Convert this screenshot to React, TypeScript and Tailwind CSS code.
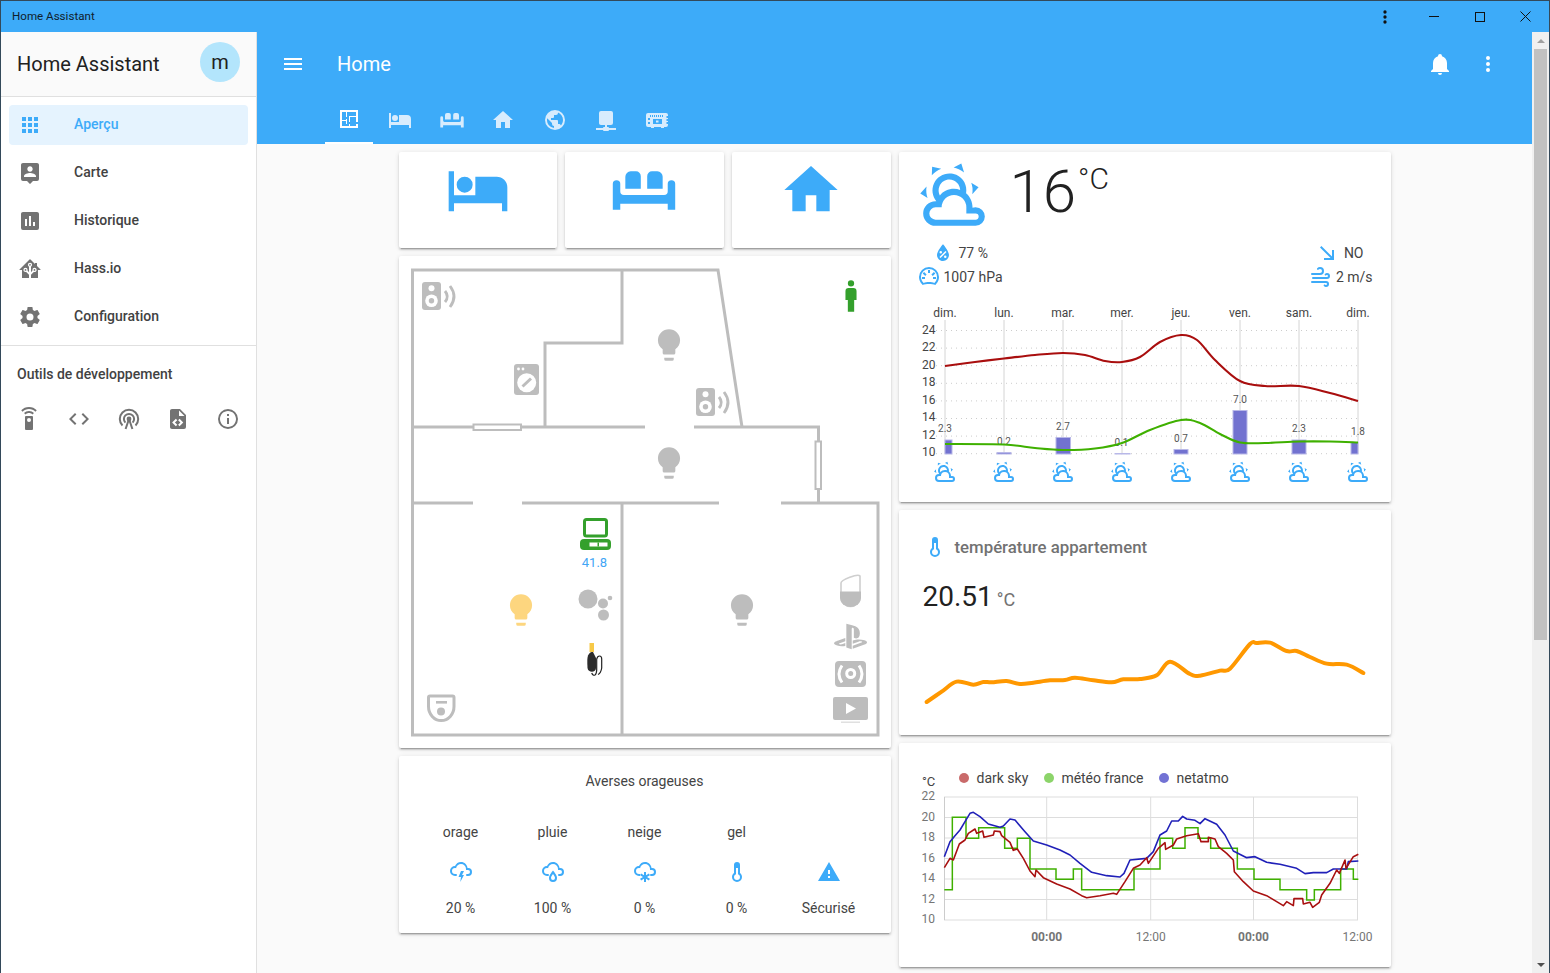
import React from 'react';
import { FaPlaystation } from 'react-icons/fa';

const mdi = {
  menu: 'M3,6H21V8H3V6M3,11H21V13H3V11M3,16H21V18H3V16Z',
  bell: 'M21,19V20H3V19L5,17V11C5,7.9 7.03,5.17 10,4.29C10,4.19 10,4.1 10,4A2,2 0 0,1 12,2A2,2 0 0,1 14,4C14,4.1 14,4.19 14,4.29C16.97,5.17 19,7.9 19,11V17L21,19M14,21A2,2 0 0,1 12,23A2,2 0 0,1 10,21',
  dots: 'M12,16A2,2 0 0,1 14,18A2,2 0 0,1 12,20A2,2 0 0,1 10,18A2,2 0 0,1 12,16M12,10A2,2 0 0,1 14,12A2,2 0 0,1 12,14A2,2 0 0,1 10,12A2,2 0 0,1 12,10M12,4A2,2 0 0,1 14,6A2,2 0 0,1 12,8A2,2 0 0,1 10,6A2,2 0 0,1 12,4Z',
  apps: 'M16,20H20V16H16M16,14H20V10H16M10,8H14V4H10M16,8H20V4H16M10,14H14V10H10M4,14H8V10H4M4,20H8V16H4M10,20H14V16H10M4,8H8V4H4V8Z',
  accountLocation: 'M18,16H6V15.1C6,13.1 10,12 12,12C14,12 18,13.1 18,15.1M12,5.3C13.5,5.3 14.7,6.5 14.7,8C14.7,9.5 13.5,10.7 12,10.7C10.5,10.7 9.3,9.5 9.3,8C9.3,6.5 10.5,5.3 12,5.3M19,2H5C3.89,2 3,2.89 3,4V18A2,2 0 0,0 5,20H9L12,23L15,20H19A2,2 0 0,0 21,18V4C21,2.89 20.1,2 19,2Z',
  pollBox: 'M17,17H15V13H17M13,17H11V7H13M9,17H7V10H9M19,3H5C3.89,3 3,3.89 3,5V19A2,2 0 0,0 5,21H19A2,2 0 0,0 21,19V5C21,3.89 20.1,3 19,3Z',
  hass: 'M21.8,13H20V21H13V17.67L15.79,14.88L16.5,15C17.66,15 18.6,14.06 18.6,12.9C18.6,11.74 17.66,10.8 16.5,10.8A2.1,2.1 0 0,0 14.4,12.9L14.5,13.61L13,15.13V9.65C13.66,9.29 14.1,8.6 14.1,7.8A2.1,2.1 0 0,0 12,5.7A2.1,2.1 0 0,0 9.9,7.8C9.9,8.6 10.34,9.29 11,9.65V15.13L9.5,13.61L9.6,12.9A2.1,2.1 0 0,0 7.5,10.8A2.1,2.1 0 0,0 5.4,12.9A2.1,2.1 0 0,0 7.5,15L8.21,14.88L11,17.67V21H4V13H2.25C1.83,13 1.42,13 1.42,12.79C1.43,12.57 1.85,12.15 2.28,11.72L11,3C11.33,2.67 11.67,2.33 12,2.33C12.33,2.33 12.67,2.67 13,3L17,7V6H19V9L21.78,11.78C22.18,12.18 22.59,12.59 22.6,12.8C22.6,13 22.2,13 21.8,13M7.5,12A0.9,0.9 0 0,1 8.4,12.9A0.9,0.9 0 0,1 7.5,13.8A0.9,0.9 0 0,1 6.6,12.9A0.9,0.9 0 0,1 7.5,12M16.5,12C17,12 17.4,12.4 17.4,12.9C17.4,13.4 17,13.8 16.5,13.8A0.9,0.9 0 0,1 15.6,12.9A0.9,0.9 0 0,1 16.5,12M12,6.9C12.5,6.9 12.9,7.3 12.9,7.8C12.9,8.3 12.5,8.7 12,8.7C11.5,8.7 11.1,8.3 11.1,7.8C11.1,7.3 11.5,6.9 12,6.9Z',
  settings: 'M12,15.5A3.5,3.5 0 0,1 8.5,12A3.5,3.5 0 0,1 12,8.5A3.5,3.5 0 0,1 15.5,12A3.5,3.5 0 0,1 12,15.5M19.43,12.97C19.47,12.65 19.5,12.33 19.5,12C19.5,11.67 19.47,11.34 19.43,11L21.54,9.37C21.73,9.22 21.78,8.95 21.66,8.73L19.66,5.27C19.54,5.05 19.27,4.96 19.05,5.05L16.56,6.05C16.04,5.66 15.5,5.32 14.87,5.07L14.5,2.42C14.46,2.18 14.25,2 14,2H10C9.75,2 9.54,2.18 9.5,2.42L9.13,5.07C8.5,5.32 7.96,5.66 7.44,6.05L4.95,5.05C4.73,4.96 4.46,5.05 4.34,5.27L2.34,8.73C2.21,8.95 2.27,9.22 2.46,9.37L4.57,11C4.53,11.34 4.5,11.67 4.5,12C4.5,12.33 4.53,12.65 4.57,12.97L2.46,14.63C2.27,14.78 2.21,15.05 2.34,15.27L4.34,18.73C4.46,18.95 4.73,19.03 4.95,18.95L7.44,17.94C7.96,18.34 8.5,18.68 9.13,18.93L9.5,21.58C9.54,21.82 9.75,22 10,22H14C14.25,22 14.46,21.82 14.5,21.58L14.87,18.93C15.5,18.67 16.04,18.34 16.56,17.94L19.05,18.95C19.27,19.03 19.54,18.95 19.66,18.73L21.66,15.27C21.78,15.05 21.73,14.78 21.54,14.63L19.43,12.97Z',
  remote: 'M12,0C8.96,0 6.21,1.23 4.22,3.22L5.63,4.63C7.26,3 9.5,2 12,2C14.5,2 16.74,3 18.36,4.64L19.77,3.23C17.79,1.23 15.04,0 12,0M7.05,6.05L8.46,7.46C9.37,6.56 10.62,6 12,6C13.38,6 14.63,6.56 15.54,7.46L16.95,6.05C15.68,4.78 13.93,4 12,4C10.07,4 8.32,4.78 7.05,6.05M12,15A2,2 0 0,1 10,13A2,2 0 0,1 12,11A2,2 0 0,1 14,13A2,2 0 0,1 12,15M15,9H9A1,1 0 0,0 8,10V22A1,1 0 0,0 9,23H15A1,1 0 0,0 16,22V10A1,1 0 0,0 15,9Z',
  code: 'M14.6,16.6L19.2,12L14.6,7.4L16,6L22,12L16,18L14.6,16.6M9.4,16.6L4.8,12L9.4,7.4L8,6L2,12L8,18L9.4,16.6Z',
  fileXml: 'M13,9H18.5L13,3.5V9M6,2H14L20,8V20A2,2 0 0,1 18,22H6C4.89,22 4,21.1 4,20V4C4,2.89 4.89,2 6,2M6.12,15.5L9.86,19.24L11.28,17.83L8.95,15.5L11.28,13.17L9.86,11.76L6.12,15.5M17.28,15.5L13.54,11.76L12.12,13.17L14.45,15.5L12.12,17.83L13.54,19.24L17.28,15.5Z',
  info: 'M11,9H13V7H11M12,20C7.59,20 4,16.41 4,12C4,7.59 7.59,4 12,4C16.41,4 20,7.59 20,12C20,16.41 16.41,20 12,20M12,2A10,10 0 0,0 2,12A10,10 0 0,0 12,22A10,10 0 0,0 22,12A10,10 0 0,0 12,2M11,17H13V11H11V17Z',
  floorPlan: 'M10,5V10H9V5H5V13H9V12H10V17H9V14H5V19H12V17H13V19H19V17H21V21H3V3H21V15H19V10H13V15H12V9H19V5H10Z',
  bed: 'M19,7H11V14H3V5H1V20H3V17H21V20H23V11A4,4 0 0,0 19,7M7,13A3,3 0 0,0 10,10A3,3 0 0,0 7,7A3,3 0 0,0 4,10A3,3 0 0,0 7,13Z',
  sofa: 'M7,5H9A1.8,1.8 0 0,1 10.8,6.8V11.5H5V7A2,2 0 0,1 7,5M15,5H17A2,2 0 0,1 19,7V11.5H13.2V6.8A1.8,1.8 0 0,1 15,5M1.7,8.3A1.4,1.4 0 0,1 3.1,9.7V12.5A1.4,1.4 0 0,0 4.5,13.9H19.5A1.4,1.4 0 0,0 20.9,12.5V9.7A1.4,1.4 0 0,1 23.7,9.7V19.4H20.9V17.2H3.1V19.4H0.3V9.7A1.4,1.4 0 0,1 1.7,8.3Z',
  home: 'M10,20V14H14V20H19V12H22L12,3L2,12H5V20H10Z',
  earth: 'M17.9,17.39C17.64,16.59 16.89,16 16,16H15V13A1,1 0 0,0 14,12H8V10H10A1,1 0 0,0 11,9V7H13A2,2 0 0,0 15,5V4.59C17.93,5.77 20,8.64 20,12C20,14.08 19.2,15.97 17.9,17.39M11,19.93C7.05,19.44 4,16.08 4,12C4,11.38 4.08,10.78 4.21,10.21L9,15V16A2,2 0 0,0 11,18M12,2A10,10 0 0,0 2,12A10,10 0 0,0 12,22A10,10 0 0,0 22,12A10,10 0 0,0 12,2Z',
  network: 'M17,3A2,2 0 0,1 19,5V15A2,2 0 0,1 17,17H13V19H14A1,1 0 0,1 15,20H22V22H15A1,1 0 0,1 14,23H10A1,1 0 0,1 9,22H2V20H9A1,1 0 0,1 10,19H11V17H7C5.89,17 5,16.1 5,15V5A2,2 0 0,1 7,3H17Z',
  partly: 'M12.74,5.47C15.1,6.5 16.35,9.03 15.92,11.46C17.19,12.56 18,14.19 18,16V16.17C18.31,16.06 18.65,16 19,16A3,3 0 0,1 22,19A3,3 0 0,1 19,22H6A4,4 0 0,1 2,18A4,4 0 0,1 6,14H6.27C5,12.45 4.6,10.24 5.5,8.26C6.72,5.5 9.97,4.24 12.74,5.47M11.93,7.3C10.16,6.5 8.09,7.31 7.31,9.07C6.85,10.09 6.93,11.22 7.41,12.13C8.5,10.83 10.16,10 12,10C12.7,10 13.38,10.12 14,10.34C13.94,9.06 13.18,7.86 11.93,7.3M13.55,3.64C13,3.4 12.45,3.23 11.88,3.12L14.37,1.82L15.27,4.71C14.76,4.29 14.19,3.93 13.55,3.64M6.09,4.44C5.6,4.79 5.17,5.19 4.8,5.63L4.91,2.82L7.87,3.5C7.25,3.71 6.65,4.03 6.09,4.44M18,9.71C17.91,9.12 17.78,8.55 17.59,8L19.97,9.5L17.92,11.73C18.03,11.08 18.05,10.4 18,9.71M3.04,11.3C3.11,11.9 3.24,12.47 3.43,13L1.06,11.5L3.1,9.28C3,9.93 2.97,10.61 3.04,11.3M19,18H16V16A4,4 0 0,0 12,12A4,4 0 0,0 8,16H6A2,2 0 0,0 4,18A2,2 0 0,0 6,20H19A1,1 0 0,0 20,19A1,1 0 0,0 19,18Z',
  water: 'M12,3.25C12,3.25 6,10 6,14C6,17.32 8.69,20 12,20A6,6 0 0,0 18,14C18,10 12,3.25 12,3.25M14.47,9.97L15.53,11.03L9.53,17.03L8.47,15.97M9.75,10A1.25,1.25 0 0,1 11,11.25A1.25,1.25 0 0,1 9.75,12.5A1.25,1.25 0 0,1 8.5,11.25A1.25,1.25 0 0,1 9.75,10M14.25,14.5A1.25,1.25 0 0,1 15.5,15.75A1.25,1.25 0 0,1 14.25,17A1.25,1.25 0 0,1 13,15.75A1.25,1.25 0 0,1 14.25,14.5Z',
  gauge: 'M17.3,18C19,16.5 20,14.4 20,12A8,8 0 0,0 12,4A8,8 0 0,0 4,12C4,14.4 5,16.5 6.7,18C8,17.4 9.9,17 12,17C14.1,17 16,17.4 17.3,18M12,2A10,10 0 0,1 22,12C22,14.9 20.8,17.5 18.9,19.3L18.4,20C16.7,19.4 14.3,19 12,19C9.7,19 7.3,19.4 5.6,20L5.1,19.3C3.2,17.5 2,14.9 2,12A10,10 0 0,1 12,2M11,5H13V8H11V5M16.9,7L18.3,8.4L15.8,10.9L14.4,9.5L16.9,7M16,12H19V14H16V12M5,12H8V14H5V12M7.1,7L9.6,9.5L8.2,10.9L5.7,8.4L7.1,7Z',
  arrow: 'M5,6.41L6.41,5L17,15.59V9H19V19H9V17H15.59L5,6.41Z',
  windy: 'M4,10A1,1 0 0,1 3,9A1,1 0 0,1 4,8H12A2,2 0 0,0 14,6A2,2 0 0,0 12,4C11.45,4 10.95,4.22 10.59,4.59C10.2,5 9.56,5 9.17,4.59C8.78,4.2 8.78,3.56 9.17,3.17C9.9,2.45 10.9,2 12,2A4,4 0 0,1 16,6A4,4 0 0,1 12,10H4M19,12A1,1 0 0,0 20,11A1,1 0 0,0 19,10C18.72,10 18.47,10.11 18.29,10.29C17.9,10.68 17.27,10.68 16.88,10.29C16.5,9.9 16.5,9.27 16.88,8.88C17.42,8.34 18.17,8 19,8A3,3 0 0,1 22,11A3,3 0 0,1 19,14H5A1,1 0 0,1 4,13A1,1 0 0,1 5,12H19M18,18H4A1,1 0 0,1 3,17A1,1 0 0,1 4,16H18A3,3 0 0,1 21,19A3,3 0 0,1 18,22C17.17,22 16.42,21.66 15.88,21.12C15.5,20.73 15.5,20.1 15.88,19.71C16.27,19.32 16.9,19.32 17.29,19.71C17.47,19.89 17.72,20 18,20A1,1 0 0,0 19,19A1,1 0 0,0 18,18Z',
  thermometer: 'M17,17A5,5 0 0,1 12,22A5,5 0 0,1 7,17C7,15.36 7.79,13.91 9,13V5A3,3 0 0,1 12,2A3,3 0 0,1 15,5V13C16.21,13.91 17,15.36 17,17M11,8V14.17C9.83,14.58 9,15.69 9,17A3,3 0 0,0 12,20A3,3 0 0,0 15,17C15,15.69 14.17,14.58 13,14.17V8H11Z',
  lightning: 'M6,16A5,5 0 0,1 1,11A5,5 0 0,1 6,6C7,3.65 9.3,2 12,2C15.43,2 18.24,4.66 18.5,8.03L19,8A4,4 0 0,1 23,12A4,4 0 0,1 19,16H18A1,1 0 0,1 17,15A1,1 0 0,1 18,14H19A2,2 0 0,0 21,12A2,2 0 0,0 19,10H17V9A5,5 0 0,0 12,4C9.5,4 7.45,5.82 7.06,8.19C6.73,8.07 6.37,8 6,8A3,3 0 0,0 3,11A3,3 0 0,0 6,14H7A1,1 0 0,1 8,15A1,1 0 0,1 7,16H6M12,11H15L13,15H15L11.25,22L12,17H9.5L12,11Z',
  cloudDrop: 'M6,16A5,5 0 0,1 1,11A5,5 0 0,1 6,6C7,3.65 9.3,2 12,2C15.43,2 18.24,4.66 18.5,8.03L19,8A4,4 0 0,1 23,12A4,4 0 0,1 19,16H18A1,1 0 0,1 17,15A1,1 0 0,1 18,14H19A2,2 0 0,0 21,12A2,2 0 0,0 19,10H17V9A5,5 0 0,0 12,4C9.5,4 7.45,5.82 7.06,8.19C6.73,8.07 6.37,8 6,8A3,3 0 0,0 3,11A3,3 0 0,0 6,14H7A1,1 0 0,1 8,15A1,1 0 0,1 7,16H6M12,10.5C12,10.5 8,15 8,18A4,4 0 0,0 16,18C16,15 12,10.5 12,10.5M12,14C12.9,15.3 14,16.9 14,18A2,2 0 0,1 10,18C10,16.9 11.1,15.3 12,14Z',
  cloudSnow: 'M6,16A5,5 0 0,1 1,11A5,5 0 0,1 6,6C7,3.65 9.3,2 12,2C15.43,2 18.24,4.66 18.5,8.03L19,8A4,4 0 0,1 23,12A4,4 0 0,1 19,16H18A1,1 0 0,1 17,15A1,1 0 0,1 18,14H19A2,2 0 0,0 21,12A2,2 0 0,0 19,10H17V9A5,5 0 0,0 12,4C9.5,4 7.45,5.82 7.06,8.19C6.73,8.07 6.37,8 6,8A3,3 0 0,0 3,11A3,3 0 0,0 6,14H7A1,1 0 0,1 8,15A1,1 0 0,1 7,16H6M11,12H13V15.3L15.9,13.6L16.9,15.3L14,17L16.9,18.7L15.9,20.4L13,18.7V22H11V18.7L8.1,20.4L7.1,18.7L10,17L7.1,15.3L8.1,13.6L11,15.3V12Z',
  alert: 'M13,14H11V10H13M13,18H11V16H13M1,21H23L12,2L1,21Z',
  bulb: 'M12,2A7,7 0 0,0 5,9C5,11.38 6.19,13.47 8,14.74V17A1,1 0 0,0 9,18H15A1,1 0 0,0 16,17V14.74C17.81,13.47 19,11.38 19,9A7,7 0 0,0 12,2M9,21A1,1 0 0,0 10,22H14A1,1 0 0,0 15,21V20H9V21Z',
  human: 'M12,2A2,2 0 0,1 14,4A2,2 0 0,1 12,6A2,2 0 0,1 10,4A2,2 0 0,1 12,2M10.5,7H13.5A2,2 0 0,1 15.5,9V14.5H14V22H10V14.5H8.5V9A2,2 0 0,1 10.5,7Z',
  pi: 'M3,5H21A2,2 0 0,1 23,7V8H21.5V10H23V11H21.5V13H23V14H21.5V16H23V17A2,2 0 0,1 21,19H19V20H16V19H9V20H6V19H3A2,2 0 0,1 1,17V7A2,2 0 0,1 3,5M5,7V9H6V7H5M7,7V9H8V7H7M9,7V9H10V7H9M11,7V9H12V7H11M13,7V9H14V7H13M15,7V9H16V7H15M17,7V9H18V7H17M3,10V12H5V10H3M3,14V16H5V14H3M8,11V16H17V11H8M11,12.5H13.5V14.5H11V12.5Z',
};

const BLUE = '#3dabf9';
const GRAY = '#bdbdbd';
const cardClass =
  'bg-white rounded-[2px] shadow-[0_2px_2px_0_rgba(0,0,0,0.14),0_1px_5px_0_rgba(0,0,0,0.12),0_3px_1px_-2px_rgba(0,0,0,0.2)]';

const Icon = ({ d, className = 'w-6 h-6' }: { d: string; className?: string }) => (
  <svg viewBox="0 0 24 24" className={`${className} shrink-0`} fill="currentColor">
    <path d={d} fillRule="evenodd" />
  </svg>
);

// icon placed on a page-coordinate svg
const Mark = ({ d, x, y, s, fill }: { d: string; x: number; y: number; s: number; fill: string }) => (
  <svg x={x} y={y} width={s} height={s} viewBox="0 0 24 24">
    <path d={d} fill={fill} />
  </svg>
);

const smooth = (pts: number[][]) => {
  let d = `M${pts[0][0]},${pts[0][1]}`;
  for (let i = 0; i < pts.length - 1; i++) {
    const p0 = pts[i - 1] || pts[i];
    const p1 = pts[i];
    const p2 = pts[i + 1];
    const p3 = pts[i + 2] || p2;
    const c1 = [p1[0] + (p2[0] - p0[0]) / 6, p1[1] + (p2[1] - p0[1]) / 6];
    const c2 = [p2[0] - (p3[0] - p1[0]) / 6, p2[1] - (p3[1] - p1[1]) / 6];
    d += `C${c1[0]},${c1[1]} ${c2[0]},${c2[1]} ${p2[0]},${p2[1]}`;
  }
  return d;
};

const navItems = [
  { label: 'Aperçu', icon: mdi.apps, active: true },
  { label: 'Carte', icon: mdi.accountLocation },
  { label: 'Historique', icon: mdi.pollBox },
  { label: 'Hass.io', icon: mdi.hass },
  { label: 'Configuration', icon: mdi.settings },
];

const Sidebar = () => (
  <aside className="w-[256px] shrink-0 bg-white border-r border-[#e0e0e0] flex flex-col">
    <div className="h-[65px] shrink-0 bg-[#fafafa] border-b border-[#e0e0e0] pl-[16px] pr-[16px] flex items-center justify-between">
      <span className="text-[20px] text-[#212121]">Home Assistant</span>
      <div className="w-10 h-10 rounded-full bg-[#b3e5fc] flex items-center justify-center text-[20px] text-[#212121] -mt-[5px]">
        m
      </div>
    </div>
    <nav className="pt-[8px] flex flex-col gap-[8px] pb-[8px] border-b border-[#e0e0e0]">
      {navItems.map((item) => (
        <div
          key={item.label}
          className={`mx-[8px] w-[239px] h-10 rounded pl-[9px] flex items-center text-[14px] font-medium ${
            item.active ? 'bg-[#e5f3fe] text-[#3dabf9]' : 'text-[#424242]'
          }`}
        >
          <Icon d={item.icon} className={`w-6 h-6 ${item.active ? 'text-[#3dabf9]' : 'text-[#737373]'}`} />
          <span className="ml-[32px] mb-[2px]">{item.label}</span>
        </div>
      ))}
    </nav>
    <div className="pl-[16px] pt-[18px] text-[14px] font-medium text-[#424242] leading-[20px]">
      Outils de développement
    </div>
    <div className="pl-[16px] pt-[23px] flex gap-[25.75px] text-[#737373]">
      <Icon d={mdi.remote} />
      <Icon d={mdi.code} />
      <svg viewBox="0 0 24 24" className="w-6 h-6 shrink-0" fill="none" stroke="currentColor" strokeWidth="2">
        <path d="M5.5 18.5a9.2 9.2 0 1 1 13 0" />
        <path d="M8.4 15.6a5.1 5.1 0 1 1 7.2 0" />
        <circle cx="12" cy="12" r="1.4" fill="currentColor" />
        <path d="M12 12L8.6 22M12 12L15.4 22" />
      </svg>
      <Icon d={mdi.fileXml} />
      <Icon d={mdi.info} />
    </div>
  </aside>
);

const tabs = [mdi.floorPlan, mdi.bed, mdi.sofa, mdi.home, mdi.earth, mdi.network, mdi.pi];

const Header = () => (
  <header className="h-[112px] shrink-0 bg-[#3dabf9] text-white">
    <div className="h-[64px] flex items-center pl-[24px] pr-[32px]">
      <Icon d={mdi.menu} />
      <span className="ml-[32px] text-[20px]">Home</span>
      <div className="ml-auto flex items-center gap-[24px]">
        <Icon d={mdi.bell} />
        <Icon d={mdi.dots} />
      </div>
    </div>
    <div className="h-[48px] flex pl-[68px]">
      {tabs.map((d, i) => (
        <div
          key={i}
          className={`h-[48px] flex items-center justify-center ${
            i === 0
              ? 'w-[48px] mr-[3.4px] text-white border-b-2 border-white'
              : 'w-[48px] mr-[3.4px] text-[#d8ecfd]'
          }`}
        >
          <Icon d={d} />
        </div>
      ))}
    </div>
  </header>
);

const FloorPlan = () => (
  <svg viewBox="399 256 492 492" className="block w-full h-[492px]">
    <g stroke={GRAY} strokeWidth="3" fill="none" strokeLinejoin="miter">
      <path d="M412.5,503V270H718L742,427" />
      <path d="M622,270V343H545V427" />
      <path d="M412,427H645M694,427H818.5V503" />
      <path d="M412,503H473M522,503H719M781,503H878V735H412.5V503M622,503V735" />
    </g>
    <rect x="473.5" y="424.5" width="47.5" height="5.5" fill="#fff" stroke={GRAY} strokeWidth="2" />
    <rect x="815.5" y="441.5" width="5.5" height="47.5" fill="#fff" stroke={GRAY} strokeWidth="2" />

    {[
      [422, 282],
      [696, 388],
    ].map(([x, y]) => (
      <g key={x} transform={`translate(${x} ${y})`}>
        <rect width="19" height="28" rx="3" fill={GRAY} />
        <circle cx="9.5" cy="6.3" r="3" fill="#fff" />
        <circle cx="9.5" cy="18.7" r="6.3" fill="#fff" />
        <circle cx="9.5" cy="18.7" r="2.7" fill={GRAY} />
        <path d="M23,9Q27.5,14.5 23,20M28,4Q36,14.5 28,25" fill="none" stroke={GRAY} strokeWidth="2.8" />
      </g>
    ))}

    <g>
      <rect x="514" y="364" width="25" height="31" rx="3" fill={GRAY} />
      <circle cx="518.5" cy="369" r="1.4" fill="#fff" />
      <circle cx="523" cy="369" r="1.4" fill="#fff" />
      <circle cx="526.7" cy="382.7" r="9.5" fill="#fff" />
      <path d="M522.5,386.5L531,378.5" stroke={GRAY} strokeWidth="3" />
    </g>

    <Mark d={mdi.bulb} x={650} y={326} s={38} fill={GRAY} />
    <Mark d={mdi.bulb} x={650} y={444} s={38} fill={GRAY} />
    <Mark d={mdi.bulb} x={502} y={591} s={38} fill="#fdd67f" />
    <Mark d={mdi.bulb} x={723} y={591} s={38} fill={GRAY} />
    <Mark d={mdi.human} x={832} y={277} s={38} fill="#34a02c" />

    <g>
      <rect x="584.5" y="519.5" width="22" height="16.5" rx="2" fill="#fff" stroke="#34a02c" strokeWidth="3" />
      <rect x="580" y="539" width="31" height="11" rx="4" fill="#34a02c" />
      <rect x="589.5" y="542.5" width="18" height="4" fill="#fff" />
      <rect x="597.5" y="542.5" width="1.5" height="4" fill="#34a02c" />
    </g>
    <text x="594.5" y="567" textAnchor="middle" fontSize="13" fill="#42a5f5">
      41.8
    </text>

    <g fill={GRAY}>
      <circle cx="588" cy="599" r="9.5" />
      <circle cx="603" cy="603.5" r="5" />
      <circle cx="610" cy="598" r="2.3" />
      <circle cx="603.5" cy="615" r="5.5" />
    </g>

    <g>
      <path d="M841,583C841,580 858,573 860,576V598A9.5,8.5 0 0,1 841,598Z" fill="#fff" stroke="#cfcfcf" strokeWidth="1.6" />
      <path d="M840,591.5H861V598A10.5,9 0 0,1 840,598Z" fill={GRAY} />
    </g>
    <FaPlaystation x={834} y={620} size={33} color={GRAY} />
    <g>
      <rect x="835" y="661" width="31" height="26" rx="4" fill={GRAY} />
      <circle cx="850.7" cy="673.5" r="4" fill="none" stroke="#fff" strokeWidth="3" />
      <path d="M842,665.5Q836,674 842,682.5M859,665.5Q865,674 859,682.5" fill="none" stroke="#fff" strokeWidth="3" />
    </g>
    <g>
      <rect x="833" y="697" width="35" height="23" rx="2" fill={GRAY} />
      <path d="M846,703V714L856,708.5Z" fill="#fff" />
      <rect x="841" y="721.5" width="19" height="1.5" fill="#e0e0e0" />
    </g>

    <g>
      <path d="M428.5,697.5Q428.5,696 430,696H452.5Q454,696 454,697.5V706.5A12.7,14 0 0,1 428.5,706.5Z" fill="none" stroke={GRAY} strokeWidth="3" />
      <rect x="436" y="701" width="11" height="2.6" fill={GRAY} />
      <circle cx="441" cy="711.5" r="4" fill={GRAY} />
    </g>

    <g>
      <rect x="589.5" y="643" width="4.5" height="9" fill="#f7c948" />
      <path d="M591.5,652C587,654 587,658 587.5,668C588,673 596,673 596,668V658L593,652Z" fill="#2b2b2b" />
      <path d="M591.7,673Q593,676 595,675Q596.5,674 596.7,670V659Q597.5,656 599.5,656Q601.7,656 601.7,659V668Q601,673 598,674.5" fill="none" stroke="#222" strokeWidth="1.2" />
    </g>
  </svg>
);

const warnings = [
  { label: 'orage', icon: mdi.lightning, value: '20 %' },
  { label: 'pluie', icon: mdi.cloudDrop, value: '100 %' },
  { label: 'neige', icon: mdi.cloudSnow, value: '0 %' },
  { label: 'gel', icon: mdi.thermometer, value: '0 %' },
  { label: '', icon: mdi.alert, value: 'Sécurisé' },
];

const Warnings = () => (
  <div className={`${cardClass} h-[177px] px-[16px] text-[14px] text-[#444]`}>
    <div className="pt-[15px] h-[66px] text-center leading-[20px]">Averses orageuses</div>
    <div className="grid grid-cols-5 text-center">
      {warnings.map((w) => (
        <div key={w.value + w.label} className="flex flex-col items-center">
          <div className="h-[20px] leading-[20px]">{w.label}</div>
          <div className="mt-[18px] h-[24px] text-[#3dabf9]">
            <Icon d={w.icon} />
          </div>
          <div className="mt-[14px] leading-[20px]">{w.value}</div>
        </div>
      ))}
    </div>
  </div>
);

const days = ['dim.', 'lun.', 'mar.', 'mer.', 'jeu.', 'ven.', 'sam.', 'dim.'];
const dayX = [945, 1004, 1063, 1122, 1181, 1240, 1299, 1358];
const yTicks = [24, 22, 20, 18, 16, 14, 12, 10];

const redLine = [
  [945, 366], [975, 362], [1004, 358.5], [1035, 355], [1063, 353], [1085, 355], [1105, 361], [1122, 362],
  [1140, 357], [1160, 342], [1181, 335], [1197, 340], [1215, 360], [1240, 381], [1265, 386], [1299, 386],
  [1330, 393], [1358, 401],
];
const greenLine = [
  [945, 444], [1004, 444.5], [1035, 448], [1063, 450], [1095, 448.5], [1122, 443], [1150, 430], [1181, 420],
  [1200, 423], [1220, 434], [1240, 442.5], [1265, 443], [1299, 441.5], [1330, 441.5], [1358, 442.5],
];
const bars = [
  { x: 945, w: 7, y: 440, label: '2.3', lx: 945, ly: 432 },
  { x: 997, w: 14, y: 452.5, label: '0.2', lx: 1004, ly: 445 },
  { x: 1056, w: 14.5, y: 437.5, label: '2.7', lx: 1063, ly: 430 },
  { x: 1115, w: 15, y: 453.5, label: '0.1', lx: 1121.5, ly: 446 },
  { x: 1174, w: 14, y: 449.5, label: '0.7', lx: 1181, ly: 442 },
  { x: 1233, w: 14, y: 410.5, label: '7.0', lx: 1240, ly: 403 },
  { x: 1292, w: 14, y: 440, label: '2.3', lx: 1299, ly: 432 },
  { x: 1351, w: 7, y: 442.5, label: '1.8', lx: 1358, ly: 435 },
];

const ForecastChart = () => (
  <svg viewBox="899 300 492 190" className="block w-full h-[190px]">
    {yTicks.map((t, i) => {
      const y = 330.5 + i * 17.6;
      return (
        <g key={t}>
          <line x1="936" x2="1358" y1={y} y2={y} stroke="#ccc" strokeWidth="1" strokeDasharray="1 4" />
          <text x="935.5" y={333.6 + i * 17.5} textAnchor="end" fontSize="12" fill="#444">
            {t}
          </text>
        </g>
      );
    })}
    {dayX.map((x, i) => (
      <g key={i}>
        <line x1={x} x2={x} y1="320" y2="454" stroke="#d4d4d4" />
        <text x={x} y="317" textAnchor="middle" fontSize="12" fill="#444">
          {days[i]}
        </text>
        <Mark d={mdi.partly} x={x - 12} y={460} s={24} fill={BLUE} />
      </g>
    ))}
    {bars.map((b) => (
      <g key={b.x}>
        <rect x={b.x} y={b.y} width={b.w} height={454 - b.y} fill="#7272d0" stroke="#b8b8e8" strokeWidth="1" />
        <text x={b.lx} y={b.ly} textAnchor="middle" fontSize="10" fill="#555">
          {b.label}
        </text>
      </g>
    ))}
    <path d={smooth(redLine)} fill="none" stroke="#a90e0e" strokeWidth="2.1" />
    <path d={smooth(greenLine)} fill="none" stroke="#3fb000" strokeWidth="2.1" />
  </svg>
);

const WeatherCard = () => (
  <div className={`${cardClass} h-[350px] overflow-hidden text-[#444] text-[14px]`}>
    <div className="h-[89px] flex items-start pl-[18px] pt-[6px]">
      <Icon d={mdi.partly} className="w-[74px] h-[74px] text-[#3dabf9]" />
      <span className="ml-[19px] -mt-[1px] text-[60px] leading-[70px] font-light text-[#212121]">16</span>
      <span className="ml-[2px] mt-[1px] text-[30px] leading-[40px] font-light text-[#212121]">°C</span>
    </div>
    <div className="h-[24px] flex items-center justify-between pl-[32px] pr-[27px]">
      <div className="flex items-center gap-[4px]">
        <Icon d={mdi.water} className="w-6 h-6 text-[#3dabf9]" />
        <span>77 %</span>
      </div>
      <div className="flex items-center gap-[5px]">
        <Icon d={mdi.arrow} className="w-6 h-6 text-[#3dabf9]" />
        <span>NO</span>
      </div>
    </div>
    <div className="h-[24px] flex items-center justify-between pl-[18px] pr-[18px]">
      <div className="flex items-center gap-[3px]">
        <Icon d={mdi.gauge} className="w-6 h-6 text-[#3dabf9]" />
        <span>1007 hPa</span>
      </div>
      <div className="flex items-center gap-[4px]">
        <Icon d={mdi.windy} className="w-6 h-6 text-[#3dabf9]" />
        <span>2 m/s</span>
      </div>
    </div>
    <div className="mt-[11px]">
      <ForecastChart />
    </div>
  </div>
);

const tempLine = [
  [80, 576], [125, 545], [170, 515], [220, 524], [250, 516], [275, 517], [320, 513], [360, 522], [400, 518], [450, 511],
  [495, 510], [525, 503], [580, 511], [635, 517], [670, 508], [720, 507], [770, 496], [810, 455], [870, 492], [900, 497],
  [960, 482], [990, 476], [1050, 402], [1070, 399], [1110, 398], [1160, 423], [1190, 423], [1230, 441], [1280, 461],
  [1340, 464], [1390, 489],
].map(([x, y]) => [x / 3 + 900, y / 3 + 510]);

const TempCard = () => (
  <div className={`${cardClass} h-[225px] overflow-hidden`}>
    <div className="h-[24px] mt-[25px] pl-[24px] flex items-center">
      <Icon d={mdi.thermometer} className="w-6 h-6 text-[#3dabf9]" />
      <span className="ml-[8px] mt-[1px] text-[16.8px] font-medium text-[#727272]">température appartement</span>
    </div>
    <div className="mt-[21px] pl-[24px] h-[34px] flex items-baseline text-[#212121]">
      <span className="text-[28px] leading-[34px]">20.51</span>
      <span className="ml-[4px] text-[18px] leading-[30px] text-[#727272]">°C</span>
    </div>
    <svg viewBox="899 630 492 80" className="block w-full h-[80px] mt-[16px]">
      <path d={smooth(tempLine)} fill="none" stroke="#ff9800" strokeWidth="4" strokeLinecap="round" />
    </svg>
  </div>
);

const zx = (x: number) => x / 3 + 900;
const zy = (y: number) => y / 3 + 745;
const toLine = (pts: number[][]) => pts.map(([x, y]) => `${zx(x)},${zy(y)}`).join(' ');

const blueHist = [
  [133, 335], [150, 290], [165, 272], [180, 255], [195, 230], [210, 205], [220, 202], [240, 215], [265, 237], [300, 247],
  [310, 243], [330, 222], [345, 225], [375, 260], [400, 288], [440, 300], [480, 315], [510, 330], [540, 355], [575, 382],
  [620, 392], [660, 396], [672, 385], [690, 345], [740, 340], [760, 320], [780, 270], [800, 258], [815, 228], [835, 228],
  [848, 214], [860, 222], [885, 226], [900, 236], [915, 221], [950, 238], [975, 270], [1000, 318], [1040, 338], [1065, 335],
  [1100, 352], [1140, 358], [1190, 370], [1215, 386], [1240, 383], [1280, 383], [1300, 372], [1340, 372], [1345, 350], [1375, 348],
];
const redHist = [
  [133, 368], [150, 340], [160, 345], [178, 297], [195, 285], [205, 265], [225, 252], [230, 265], [248, 258], [252, 277],
  [280, 270], [283, 258], [300, 260], [305, 272], [330, 292], [340, 316], [352, 312], [370, 340], [390, 378], [405, 395],
  [408, 375], [430, 398], [470, 417], [510, 432], [545, 452], [560, 458], [600, 452], [640, 445], [650, 448], [675, 410],
  [700, 370], [720, 360], [740, 338], [745, 355], [775, 310], [795, 293], [797, 313], [820, 300], [830, 282], [860, 272],
  [895, 266], [903, 290], [925, 290], [925, 277], [945, 282], [955, 305], [980, 325], [1000, 345], [1003, 380], [1030, 410],
  [1060, 438], [1100, 452], [1150, 482], [1160, 470], [1180, 482], [1182, 461], [1208, 461], [1210, 477], [1230, 472], [1238, 487],
  [1258, 472], [1265, 450], [1290, 415], [1310, 375], [1318, 385], [1335, 345], [1338, 370], [1360, 335], [1375, 328],
];
const greenSteps = [
  [133, 434], [157, 434], [157, 217], [198, 217], [198, 280], [236, 280], [236, 248], [314, 248], [314, 310], [352, 310],
  [352, 280], [390, 280], [390, 372], [468, 372], [468, 403], [520, 403], [520, 372], [545, 372], [545, 434], [702, 434],
  [702, 372], [780, 372], [780, 280], [818, 280], [818, 310], [855, 310], [855, 248], [894, 248], [894, 280], [932, 280],
  [932, 310], [1012, 310], [1012, 372], [1062, 372], [1062, 403], [1140, 403], [1140, 434], [1220, 434], [1220, 465], [1243, 465],
  [1243, 434], [1322, 434], [1322, 372], [1360, 372], [1360, 403], [1375, 403],
];

const legend = [
  { x: 964, color: '#c96a6a', label: 'dark sky' },
  { x: 1049, color: '#8cd46a', label: 'météo france' },
  { x: 1164, color: '#7272d4', label: 'netatmo' },
];

const HistoryCard = () => (
  <div className={`${cardClass} h-[224px] overflow-hidden`}>
    <svg viewBox="899 743 492 224" className="block w-full h-[224px]">
      <text x="922" y="785.5" fontSize="13" fill="#444">
        °C
      </text>
      {legend.map((l) => (
        <g key={l.label}>
          <circle cx={l.x} cy="778" r="5" fill={l.color} />
          <text x={l.x + 12.5} y="783" fontSize="14" fill="#444" textLength={l.label === 'météo france' ? 82 : undefined}>
            {l.label}
          </text>
        </g>
      ))}
      {[22, 20, 18, 16, 14, 12, 10].map((t, i) => {
        const y = 797 + i * 20.5;
        return (
          <g key={t}>
            <line x1="944" x2="1358" y1={y} y2={y} stroke="#ddd" />
            <text x="935" y={y + 3.3} textAnchor="end" fontSize="12" fill="#757575">
              {t}
            </text>
          </g>
        );
      })}
      <line x1="944.5" x2="944.5" y1="797" y2="920" stroke="#ccc" />
      {[
        { x: 1046.7, label: '00:00', bold: true },
        { x: 1150.7, label: '12:00', bold: false },
        { x: 1253.5, label: '00:00', bold: true },
        { x: 1357.5, label: '12:00', bold: false },
      ].map((t) => (
        <g key={t.x}>
          <line x1={t.x} x2={t.x} y1="797" y2="920" stroke="#ddd" />
          <text
            x={t.x}
            y="941"
            textAnchor="middle"
            fontSize="12"
            fill="#757575"
            fontWeight={t.bold ? 700 : 400}
          >
            {t.label}
          </text>
        </g>
      ))}
      <polyline points={toLine(greenSteps)} fill="none" stroke="#3fb000" strokeWidth="1.5" />
      <polyline points={toLine(blueHist)} fill="none" stroke="#2020b8" strokeWidth="1.6" strokeLinejoin="round" />
      <polyline points={toLine(redHist)} fill="none" stroke="#a81010" strokeWidth="1.6" strokeLinejoin="round" />
    </svg>
  </div>
);

const TitleBar = () => (
  <div className="h-[31px] shrink-0 bg-[#3dabf9] flex items-center pl-[11px] text-[11.6px] text-[#10202c]">
    <span>Home Assistant</span>
    <div className="ml-auto flex items-center text-[#111]">
      <Icon d={mdi.dots} className="w-[20px] h-[20px] mr-[34px]" />
      <div className="w-[10px] h-[1px] bg-[#111] mr-[36px]" />
      <div className="w-[10px] h-[10px] border border-[#111] mr-[35px]" />
      <svg viewBox="0 0 11 11" className="w-[11px] h-[11px] mr-[18px]" stroke="#111" fill="none">
        <path d="M0.5,0.5L10.5,10.5M10.5,0.5L0.5,10.5" />
      </svg>
    </div>
  </div>
);

const Scrollbar = () => (
  <div className="w-[17px] shrink-0 bg-[#f0f0f0] flex flex-col items-center">
    <div className="h-[17px] flex items-center justify-center">
      <div className="w-0 h-0 border-x-[4px] border-x-transparent border-b-[4px] border-b-[#a0a0a0]" />
    </div>
    <div className="w-[13px] h-[591px] bg-[#c1c1c1]" />
    <div className="mt-auto h-[17px] flex items-center justify-center">
      <div className="w-0 h-0 border-x-[4px] border-x-transparent border-t-[4px] border-t-[#505050]" />
    </div>
  </div>
);

export default function App() {
  return (
    <div className="w-[1550px] h-[973px] overflow-hidden flex flex-col border-t border-x border-[#33495a] font-['Roboto',sans-serif] bg-[#fafafa]">
      <TitleBar />
      <div className="flex flex-1 min-h-0">
        <Sidebar />
        <div className="flex-1 min-w-0 flex flex-col">
          <Header />
          <main className="flex-1 min-h-0 overflow-hidden flex justify-center gap-[8px] pt-[8px]">
            <div className="w-[492px] flex flex-col gap-[8px]">
              <div className="grid grid-cols-3 gap-[8px] h-[96px]">
                {[mdi.bed, mdi.sofa, mdi.home].map((d, i) => (
                  <div key={i} className={`${cardClass} flex justify-center pt-[6px] text-[#3dabf9]`}>
                    <Icon d={d} className="w-16 h-16" />
                  </div>
                ))}
              </div>
              <div className={cardClass}>
                <FloorPlan />
              </div>
              <Warnings />
            </div>
            <div className="w-[492px] flex flex-col gap-[8px]">
              <WeatherCard />
              <TempCard />
              <HistoryCard />
            </div>
          </main>
        </div>
        <Scrollbar />
      </div>
    </div>
  );
}
